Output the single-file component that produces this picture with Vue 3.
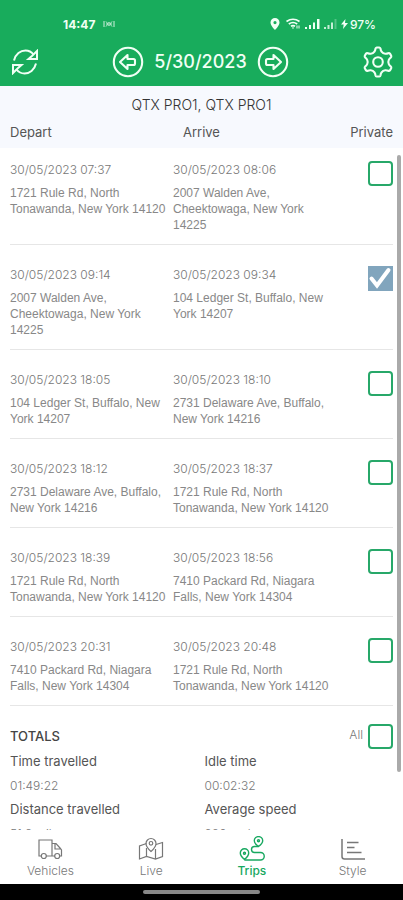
<script setup>
import { ref } from 'vue'

const rule = '1721 Rule Rd, North Tonawanda, New York 14120'
const walden = '2007 Walden Ave, Cheektowaga, New York 14225'
const ledger = '104 Ledger St, Buffalo, New York 14207'
const delaware = '2731 Delaware Ave, Buffalo, New York 14216'
const packard = '7410 Packard Rd, Niagara Falls, New York 14304'

const trips = ref([
  { depart: '30/05/2023 07:37', from: rule, arrive: '30/05/2023 08:06', to: walden, private: false },
  { depart: '30/05/2023 09:14', from: walden, arrive: '30/05/2023 09:34', to: ledger, private: true },
  { depart: '30/05/2023 18:05', from: ledger, arrive: '30/05/2023 18:10', to: delaware, private: false },
  { depart: '30/05/2023 18:12', from: delaware, arrive: '30/05/2023 18:37', to: rule, private: false },
  { depart: '30/05/2023 18:39', from: rule, arrive: '30/05/2023 18:56', to: packard, private: false },
  { depart: '30/05/2023 20:31', from: packard, arrive: '30/05/2023 20:48', to: rule, private: false },
])
const all = ref(false)

const totals = [
  { label: 'Time travelled', value: '01:49:22' },
  { label: 'Idle time', value: '00:02:32' },
  { label: 'Distance travelled', value: '51.3 miles' },
  { label: 'Average speed', value: '280 mph' },
]

// Six-toothed gear outline centred in a 32 unit box
function polar(radius, degrees) {
  const a = (degrees * Math.PI) / 180
  return `${(16 + radius * Math.sin(a)).toFixed(2)} ${(16 - radius * Math.cos(a)).toFixed(2)}`
}
const gear = 'M' + [0, 60, 120, 180, 240, 300].map((d) =>
  `${polar(11, d - 19)}Q${polar(12, d - 13)} ${polar(13.4, d - 11)}Q${polar(14.6, d - 9)} ${polar(14.6, d - 5)}` +
  `L${polar(14.6, d + 5)}Q${polar(14.6, d + 9)} ${polar(13.4, d + 11)}Q${polar(12, d + 13)} ${polar(11, d + 19)}` +
  `Q${polar(9.8, d + 30)} ${polar(11, d + 41)}`
).join('L') + 'Z'
</script>

<template>
  <div class="app">
    <header class="top">
      <div class="status">
        <div class="status-left">
          <span class="clock">14:47</span>
          <svg width="12" height="8" viewBox="0 0 12 8" fill="none" stroke="currentColor" opacity=".85">
            <path d="M1 1v6M3 1.500C4.500 2.500 4.500 5.500 3 6.500M11 1v6M9 1.500C7.500 2.500 7.500 5.500 9 6.500" /><circle cx="6" cy="4" r="1.300" />
          </svg>
        </div>
        <div class="status-right">
          <svg width="10" height="12" viewBox="0 0 10 12"><path fill="currentColor" fill-rule="evenodd" d="M5 0a4.500 4.500 0 0 0-4.500 4.500C.5 7.500 5 12 5 12s4.500-4.500 4.500-7.500A4.500 4.500 0 0 0 5 0Zm0 3a1.600 1.600 0 1 1 0 3.200A1.600 1.600 0 0 1 5 3Z" /></svg>
          <svg class="wifi" width="15" height="12" viewBox="0 0 15 12" fill="none" stroke="currentColor" stroke-width="1.700"><path d="M.5 3.500q6.500-4.500 13 0M2.800 6q4.200-3 8.400 0M5 8.300q2-1.500 4 0" /><path d="M5.800 9.500h2.400L7 11z" fill="currentColor" stroke="none" /><path d="M11 7.500v3M13 7.500v3" stroke-width="1" /></svg>
          <svg width="15" height="10" viewBox="0 0 15 10" fill="currentColor"><path d="M0 8h2v2H0zM4 6h2v4H4zM8 3.500h2V10H8zM12 0h2.500v10H12z" /></svg>
          <svg class="sim" width="13" height="10" viewBox="0 0 13 10" fill="currentColor"><path d="M0 8h2v2H0zM3.500 6h2v4h-2zM7 3.500h2V10H7z" /><path opacity=".35" d="M10.500 0h2v10h-2z" /></svg>
          <svg width="7" height="10" viewBox="0 0 7 10" fill="currentColor"><path d="M4.500 0 0 5.500h2.700L2 10l5-6H4z" /></svg>
          <span class="battery">97%</span>
        </div>
      </div>
      <div class="bar">
        <button class="icon" aria-label="Refresh">
          <svg width="28" height="26" viewBox="0 0 28 26" fill="none" stroke="currentColor" stroke-width="2">
            <path d="M3 11.500C4.500 5 9.500 1.500 14.500 1.500c3.400 0 6 1.400 8 4M25 14.500c-1.500 6.500-6.500 10-11.500 10-3.400 0-6-1.400-8-4" />
            <path d="M26 2v8h-8.500l3.700-3.200zM2 24v-8h8.500l-3.700 3.200z" />
          </svg>
        </button>
        <div class="day">
          <button class="icon" aria-label="Previous day">
            <svg width="32" height="32" viewBox="0 0 32 32" fill="none" stroke="currentColor" stroke-width="2.100" stroke-linejoin="round">
              <circle cx="16" cy="16" r="14.200" /><path d="m8 16 7.500-7v4h6a1.500 1.500 0 0 1 1.500 1.500v3a1.500 1.500 0 0 1-1.500 1.500h-6v4z" />
            </svg>
          </button>
          <h1>5/30/2023</h1>
          <button class="icon" aria-label="Next day">
            <svg width="32" height="32" viewBox="0 0 32 32" fill="none" stroke="currentColor" stroke-width="2.100" stroke-linejoin="round">
              <circle cx="16" cy="16" r="14.200" /><path d="m24 16-7.500-7v4h-6A1.500 1.500 0 0 0 9 14.500v3a1.500 1.500 0 0 0 1.500 1.500h6v4z" />
            </svg>
          </button>
        </div>
        <button class="icon" aria-label="Settings">
          <svg width="32" height="32" viewBox="0 0 32 32" fill="none" stroke="currentColor" stroke-width="2.100" stroke-linejoin="round">
            <path :d="gear" />
            <circle cx="16" cy="16" r="4.800" />
          </svg>
        </button>
      </div>
    </header>

    <main class="list">
      <table>
        <caption>QTX PRO1, QTX PRO1</caption>
        <thead>
          <tr><th class="c-from">Depart</th><th class="c-to">Arrive</th><th class="c-private">Private</th></tr>
        </thead>
        <tbody>
          <tr v-for="trip in trips" :key="trip.depart">
            <td><time>{{ trip.depart }}</time><p>{{ trip.from }}</p></td>
            <td><time>{{ trip.arrive }}</time><p>{{ trip.to }}</p></td>
            <td class="check"><input v-model="trip.private" type="checkbox" :aria-label="'Private trip ' + trip.depart"></td>
          </tr>
        </tbody>
      </table>
      <section class="totals">
        <div class="totals-head">
          <h2>TOTALS</h2>
          <label>All <input v-model="all" type="checkbox"></label>
        </div>
        <dl>
          <div v-for="item in totals" :key="item.label">
            <dt>{{ item.label }}</dt>
            <dd>{{ item.value }}</dd>
          </div>
        </dl>
      </section>
      <div class="thumb"></div>
    </main>

    <nav>
      <a href="#vehicles">
        <svg width="26" height="26" viewBox="0 0 26 26" fill="none" stroke="currentColor" stroke-width="1.200">
          <path d="M4.500 20H2V4h13v16H9M15 7.500h4l4 4.500 1.500 2v6H23M15 20h3M18 8v5h6" /><circle cx="6.800" cy="20" r="2.500" /><circle cx="20.200" cy="20" r="2.500" />
        </svg>
        <span>Vehicles</span>
      </a>
      <a href="#live">
        <svg width="26" height="26" viewBox="0 0 26 26" fill="none" stroke="currentColor" stroke-width="1.200">
          <path d="M8.500 7.500 1.500 10v13l7-2.500 9 2.500 7-2.500V6.500L18 8.500M8.500 12v8.500M17.500 13v10" /><path d="M13 15.500S8 11 8 7.500a5 5 0 0 1 10 0c0 3.500-5 8-5 8Z" /><circle cx="13" cy="7.300" r="1.800" />
        </svg>
        <span>Live</span>
      </a>
      <a href="#trips" class="active" aria-current="page">
        <svg width="26" height="26" viewBox="0 0 26 26" fill="none" stroke="currentColor" stroke-width="1.400">
          <path d="M19.500 10.500S15.300 7.500 15.300 4.800a4.200 4.200 0 0 1 8.400 0c0 2.700-4.200 5.700-4.200 5.700ZM5.500 23.500s-4.200-3.500-4.200-6.500a4.200 4.200 0 0 1 8.400 0c0 3-4.200 6.500-4.200 6.500Z" /><circle cx="19.500" cy="4.800" r="1" /><circle cx="5.500" cy="17.200" r="1" /><path d="M19.500 10.500h-4a3 3 0 0 0 0 6h6a3.700 3.700 0 0 1 0 7.500h-16" />
        </svg>
        <span>Trips</span>
      </a>
      <a href="#style">
        <svg width="26" height="26" viewBox="0 0 26 26" fill="none" stroke="currentColor" stroke-width="1.500">
          <path d="M2 3v17.500Q2 23 4.500 23H25M7 6.500h11.500M7 11.500h7.500M7 16.500h14.500" />
        </svg>
        <span>Style</span>
      </a>
    </nav>
    <div class="gesture"><span></span></div>
  </div>
</template>

<style>
body { margin: 0; }
</style>

<style scoped>
* { box-sizing: border-box; }
.app {
  display: flex;
  flex-direction: column;
  height: 100vh;
  background: #fff;
  color: #777;
  font-family: Inter, "Liberation Sans", sans-serif;
  font-weight: 300;
}
.top { background: #18ac5c; color: #f1fff5; flex: none; }
.status {
  display: flex;
  justify-content: space-between;
  align-items: center;
  height: 38px;
  padding: 10px 27px 0 63px;
}
.status-left, .status-right { display: flex; align-items: center; }
.status-left { gap: 8px; }
.status-right { gap: 4px; }
.clock { font-size: 12px; font-weight: 700; }
.battery { font-size: 12px; font-weight: 500; margin-left: -2px; }
.wifi { margin-left: 2px; }
.sim { opacity: .8; }
.bar {
  display: flex;
  align-items: center;
  justify-content: space-between;
  height: 48px;
  padding: 0 9px 0 11px;
}
.day { display: flex; align-items: center; gap: 10px; }
h1 { margin: 0; font-size: 18px; font-weight: 500; line-height: 24px; }
.icon {
  display: flex;
  padding: 0;
  border: 0;
  background: none;
  color: inherit;
}
.list { position: relative; flex: 1; min-height: 0; overflow: hidden; }
table { width: 100%; border-collapse: collapse; table-layout: fixed; }
caption {
  height: 36px;
  padding-top: 10px;
  background: #f7f9fe;
  color: #333;
  font-size: 14px;
  font-weight: 300;
  line-height: 18px;
}
thead { background: #f7f9fe; color: #555; }
th {
  height: 26px;
  padding: 0 0 6px;
  font-size: 13px;
  font-weight: 400;
  line-height: 18px;
  text-align: left;
}
.c-from { width: 173px; padding-left: 10px; }
.c-to { padding-left: 10px; }
.c-private { width: 60px; padding-right: 10px; text-align: right; }
td { padding: 21px 0 11px; vertical-align: top; }
tbody tr:first-child td { padding-top: 13px; }
td:first-child { padding-left: 10px; }
tbody tr {
  background: linear-gradient(#e6e6e6, #e6e6e6) center bottom / calc(100% - 20px) 1px no-repeat;
}
time { display: block; font-size: 12px; line-height: 18px; }
p {
  margin: 6px 0 1px;
  max-width: 160px;
  color: #888;
  font-family: "Liberation Sans", Arial, sans-serif;
  font-size: 12px;
  line-height: 16px;
}
td.check { padding-right: 10px; text-align: right; }
input {
  appearance: none;
  display: inline-block;
  width: 25px;
  height: 25px;
  margin: 0;
  border: 2px solid #27a869;
  border-radius: 4px;
  background: #fff;
  vertical-align: top;
}
input:checked {
  border: 0;
  border-radius: 0;
  background: #81a5bd url("data:image/svg+xml,%3Csvg xmlns='http://www.w3.org/2000/svg' viewBox='0 0 25 25'%3E%3Cpath d='M3.500 12.500 9 19.500 20.500 4' fill='none' stroke='white' stroke-width='4' stroke-linecap='round'/%3E%3C/svg%3E") center / 25px 25px;
}
.totals { padding: 18px 10px 0; }
.totals-head { display: flex; justify-content: space-between; align-items: flex-start; height: 27px; }
h2 { margin: 0; color: #444; font-size: 13px; font-weight: 500; line-height: 24px; }
label { display: flex; gap: 5px; font-size: 12px; line-height: 22px; }
dl { display: grid; grid-template-columns: 1fr 1fr; column-gap: 6px; margin: 0; }
dt { color: #555; font-size: 13px; font-weight: 400; line-height: 20px; }
dd { margin: 0 0 2px; padding-top: 4px; font-size: 12px; line-height: 22px; }
.thumb {
  position: absolute;
  top: 69px;
  right: 2px;
  width: 4px;
  height: calc(83% - 1px);
  border-radius: 2px;
  background: #aaa;
}
nav { display: flex; flex: none; height: 54px; background: #fff; }
nav a {
  display: flex;
  flex: 1;
  flex-direction: column;
  align-items: center;
  padding-top: 6px;
  color: #777;
  font-size: 12px;
  line-height: 18px;
  text-decoration: none;
}
nav a.active { color: #18a860; font-weight: 500; }
.gesture {
  display: flex;
  flex: none;
  align-items: center;
  justify-content: center;
  height: 16px;
  background: #000;
}
.gesture span { width: 117px; height: 4px; border-radius: 2px; background: #888; }
</style>
